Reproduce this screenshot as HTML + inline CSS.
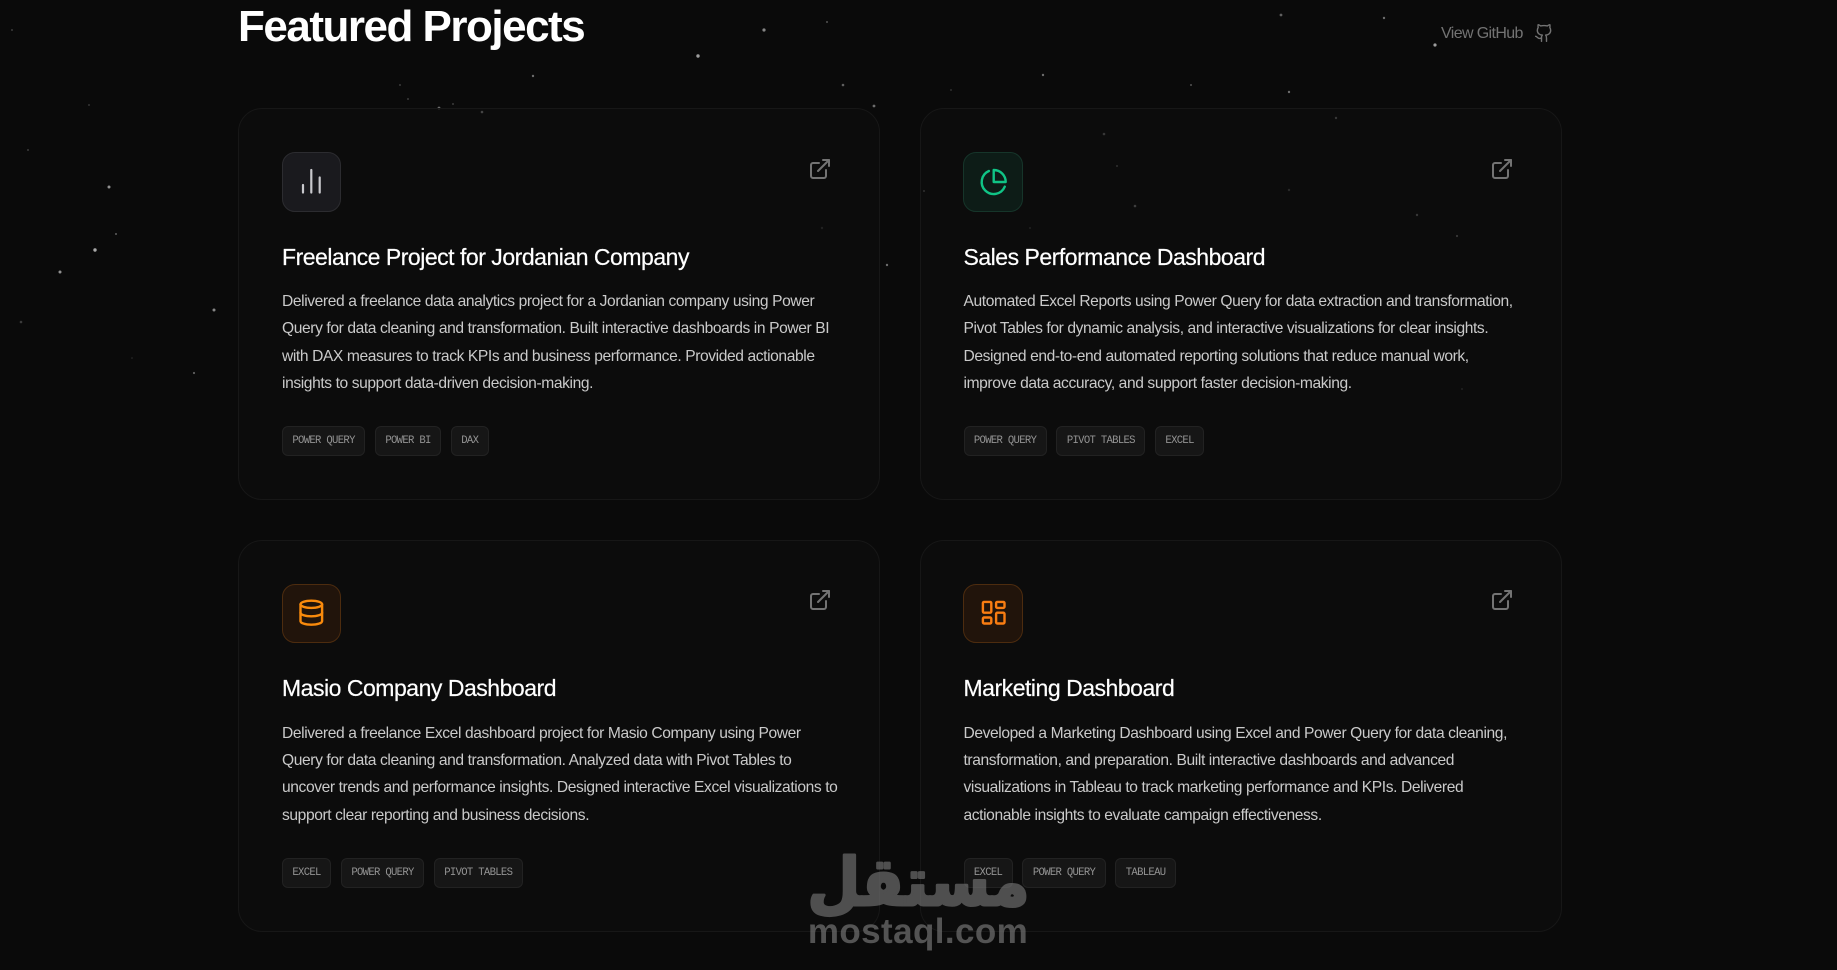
<!DOCTYPE html>
<html lang="en">
<head>
<meta charset="utf-8">
<title>Featured Projects</title>
<style>
html,body{margin:0;padding:0;background:#0a0a0a;}
body{width:1837px;height:970px;overflow:hidden;position:relative;font-family:"Liberation Sans",Arial,sans-serif;color:#fff;}
.stars{position:absolute;left:0;top:0;z-index:0;}
h2{position:absolute;left:238px;top:2px;margin:0;font-size:44px;line-height:50px;font-weight:700;letter-spacing:-1.5px;white-space:nowrap;color:#fff;z-index:2;}
.gh{position:absolute;left:1441px;top:22px;font-size:16px;line-height:24px;letter-spacing:-.62px;color:#737373;white-space:nowrap;z-index:2;}
.ghi{position:absolute;left:1534px;top:23px;z-index:2;}
.card{position:absolute;width:640px;height:390px;border:1px solid #171717;border-radius:24px;background:rgba(17,17,17,.42);z-index:1;}
.icon{position:absolute;left:42.5px;top:43px;width:57px;height:58px;border-radius:13px;border:1px solid;}
.icon svg{position:absolute;left:-1px;top:-1px;}
.gray{background:#1a1a1e;border-color:#2c2c30;}
.green{background:#0d1c17;border-color:#16352a;}
.orange{background:#21140b;border-color:#4d2c0f;}
.ext{position:absolute;left:569px;top:48px;}
.r2 .ext{top:47px;}
h3{position:absolute;left:43px;top:133px;margin:0;font-size:23px;line-height:30px;font-weight:400;letter-spacing:-.48px;white-space:nowrap;color:#fff;-webkit-text-stroke:.2px #fff;}
.r2 h3{top:132px;}
p{position:absolute;left:43px;top:179px;margin:0;font-size:15.6px;line-height:27.3px;letter-spacing:-.4px;white-space:nowrap;color:#cacaca;}
.r2 p{top:179.4px;}
.tags{position:absolute;left:43px;top:317px;display:flex;gap:9.8px;}
.tags span{display:block;height:28px;line-height:28px;padding:0 9.4px;border:1px solid #222;border-radius:6px;background:#161616;font-family:"Liberation Mono",monospace;font-size:10.6px;letter-spacing:-.69px;color:#939393;white-space:nowrap;}
.wm{position:absolute;z-index:5;white-space:nowrap;}
.wsvg{left:0;top:0;opacity:.68;}
.wl{left:806px;top:910px;width:224px;text-align:center;color:rgba(112,112,112,.72);font-family:"Liberation Sans",sans-serif;font-weight:700;font-size:35px;line-height:44px;letter-spacing:.4px;}
</style>
</head>
<body>
<svg class="stars" width="1837" height="970" viewBox="0 0 1837 970" fill="#fff">
<circle cx="12" cy="30" r="1" opacity=".2"/><circle cx="89" cy="105" r="1" opacity=".18"/><circle cx="28" cy="150" r="1" opacity=".2"/>
<circle cx="109" cy="187" r="1.5" opacity=".55"/><circle cx="116" cy="234" r="1" opacity=".35"/><circle cx="95" cy="250" r="1.7" opacity=".65"/>
<circle cx="60" cy="272" r="1.5" opacity=".55"/><circle cx="21" cy="322" r="1.3" opacity=".2"/><circle cx="214" cy="310" r="1.5" opacity=".5"/>
<circle cx="132" cy="358" r=".8" opacity=".15"/><circle cx="194" cy="373" r="1.1" opacity=".35"/>
<circle cx="764" cy="30" r="1.6" opacity=".5"/><circle cx="698" cy="56" r="1.7" opacity=".6"/><circle cx="827" cy="22" r="1" opacity=".3"/>
<circle cx="533" cy="76" r="1.2" opacity=".4"/><circle cx="843" cy="85" r="1.3" opacity=".35"/><circle cx="400" cy="85" r="1" opacity=".2"/>
<circle cx="408" cy="99" r="1" opacity=".2"/><circle cx="439" cy="108" r="1.4" opacity=".4"/><circle cx="453" cy="104" r="1" opacity=".2"/>
<circle cx="482" cy="112" r="1.3" opacity=".4"/><circle cx="874" cy="106" r="1.4" opacity=".4"/><circle cx="323" cy="155" r="1.3" opacity=".25"/>
<circle cx="822" cy="228" r="1.2" opacity=".15"/><circle cx="887" cy="265" r="1.2" opacity=".4"/>
<circle cx="1281" cy="15" r="1.4" opacity=".35"/><circle cx="1384" cy="18" r="1.2" opacity=".4"/><circle cx="1435" cy="45" r="1.6" opacity=".6"/>
<circle cx="1043" cy="75" r="1.2" opacity=".4"/><circle cx="1191" cy="85" r="1" opacity=".3"/><circle cx="1289" cy="92" r="1.2" opacity=".4"/>
<circle cx="951" cy="90" r="1" opacity=".15"/><circle cx="1336" cy="118" r="1.2" opacity=".3"/><circle cx="1104" cy="134" r="1.3" opacity=".3"/>
<circle cx="1117" cy="166" r="1" opacity=".25"/><circle cx="924" cy="191" r="1" opacity=".25"/><circle cx="1289" cy="190" r="1.2" opacity=".2"/>
<circle cx="1135" cy="206" r="1.3" opacity=".35"/><circle cx="1417" cy="215" r="1.2" opacity=".3"/><circle cx="1457" cy="236" r="1.1" opacity=".3"/>
<circle cx="1030" cy="228" r=".9" opacity=".2"/><circle cx="1462" cy="389" r="1" opacity=".15"/>
</svg>

<h2>Featured Projects</h2>
<div class="gh">View GitHub</div>
<svg class="ghi" width="20" height="20" viewBox="0 0 24 24" fill="none" stroke="#737373" stroke-width="1.7" stroke-linecap="round" stroke-linejoin="round"><path d="M15 22v-4a4.8 4.8 0 0 0-1-3.5c3 0 6-2 6-5.5.08-1.25-.27-2.48-1-3.5.28-1.15.28-2.35 0-3.5 0 0-1 0-3 1.5-2.64-.5-5.36-.5-8 0C6 2 5 2 5 2c-.3 1.15-.3 2.35 0 3.5A5.403 5.403 0 0 0 4 9c0 3.5 3 5.5 6 5.5-.39.49-.68 1.05-.85 1.65-.17.6-.22 1.23-.15 1.85v4"/><path d="M9 18c-4.51 2-5-2-7-2"/></svg>

<div class="card" style="left:238px;top:108px;">
  <div class="icon gray"><svg width="60" height="60" viewBox="0 0 60 60" fill="none" stroke="#c8c8cc" stroke-width="2.2" stroke-linecap="round"><path d="M21 40.5V33"/><path d="M29.3 40.5V18"/><path d="M37.7 40.5V25.5"/></svg></div>
  <svg class="ext" width="24" height="24" viewBox="0 0 24 24" fill="none" stroke="#737373" stroke-width="2" stroke-linecap="round" stroke-linejoin="round"><path d="M18 13v6a2 2 0 0 1-2 2H5a2 2 0 0 1-2-2V8a2 2 0 0 1 2-2h6"/><polyline points="15 3 21 3 21 9"/><line x1="10" y1="14" x2="21" y2="3"/></svg>
  <h3>Freelance Project for Jordanian Company</h3>
  <p>Delivered a freelance data analytics project for a Jordanian company using Power<br>Query for data cleaning and transformation. Built interactive dashboards in Power BI<br>with DAX measures to track KPIs and business performance. Provided actionable<br>insights to support data-driven decision-making.</p>
  <div class="tags"><span>POWER QUERY</span><span>POWER BI</span><span>DAX</span></div>
</div>

<div class="card" style="left:919.5px;top:108px;">
  <div class="icon green" style="width:58px"><svg width="60" height="60" viewBox="0 0 60 60" fill="none"><g transform="translate(16.3 15.6) scale(1.2)" stroke="#10c486" stroke-width="2" stroke-linecap="round" stroke-linejoin="round"><path d="M21.21 15.89A10 10 0 1 1 8 2.83"/><path d="M22 12A10 10 0 0 0 12 2v10z"/></g></svg></div>
  <svg class="ext" width="24" height="24" viewBox="0 0 24 24" fill="none" stroke="#737373" stroke-width="2" stroke-linecap="round" stroke-linejoin="round"><path d="M18 13v6a2 2 0 0 1-2 2H5a2 2 0 0 1-2-2V8a2 2 0 0 1 2-2h6"/><polyline points="15 3 21 3 21 9"/><line x1="10" y1="14" x2="21" y2="3"/></svg>
  <h3>Sales Performance Dashboard</h3>
  <p>Automated Excel Reports using Power Query for data extraction and transformation,<br>Pivot Tables for dynamic analysis, and interactive visualizations for clear insights.<br>Designed end-to-end automated reporting solutions that reduce manual work,<br>improve data accuracy, and support faster decision-making.</p>
  <div class="tags"><span>POWER QUERY</span><span>PIVOT TABLES</span><span>EXCEL</span></div>
</div>

<div class="card r2" style="left:238px;top:539.5px;">
  <div class="icon orange" style="height:57px"><svg width="60" height="60" viewBox="0 0 60 60" fill="none"><g transform="translate(14.9 14.3) scale(1.2)" stroke="#f98a0c" stroke-width="2" stroke-linecap="round" stroke-linejoin="round"><ellipse cx="12" cy="5" rx="9" ry="3"/><path d="M3 5V19A9 3 0 0 0 21 19V5"/><path d="M3 12A9 3 0 0 0 21 12"/></g></svg></div>
  <svg class="ext" width="24" height="24" viewBox="0 0 24 24" fill="none" stroke="#737373" stroke-width="2" stroke-linecap="round" stroke-linejoin="round"><path d="M18 13v6a2 2 0 0 1-2 2H5a2 2 0 0 1-2-2V8a2 2 0 0 1 2-2h6"/><polyline points="15 3 21 3 21 9"/><line x1="10" y1="14" x2="21" y2="3"/></svg>
  <h3>Masio Company Dashboard</h3>
  <p>Delivered a freelance Excel dashboard project for Masio Company using Power<br>Query for data cleaning and transformation. Analyzed data with Pivot Tables to<br>uncover trends and performance insights. Designed interactive Excel visualizations to<br>support clear reporting and business decisions.</p>
  <div class="tags"><span>EXCEL</span><span>POWER QUERY</span><span>PIVOT TABLES</span></div>
</div>

<div class="card r2" style="left:919.5px;top:539.5px;">
  <div class="icon orange" style="width:58px;height:57px"><svg width="60" height="60" viewBox="0 0 60 60" fill="none"><g transform="translate(16.3 14.3) scale(1.2)" stroke="#f97d12" stroke-width="2" stroke-linecap="round" stroke-linejoin="round"><rect x="3" y="3" width="7" height="9" rx="1"/><rect x="14" y="3" width="7" height="5" rx="1"/><rect x="14" y="12" width="7" height="9" rx="1"/><rect x="3" y="16" width="7" height="5" rx="1"/></g></svg></div>
  <svg class="ext" width="24" height="24" viewBox="0 0 24 24" fill="none" stroke="#737373" stroke-width="2" stroke-linecap="round" stroke-linejoin="round"><path d="M18 13v6a2 2 0 0 1-2 2H5a2 2 0 0 1-2-2V8a2 2 0 0 1 2-2h6"/><polyline points="15 3 21 3 21 9"/><line x1="10" y1="14" x2="21" y2="3"/></svg>
  <h3>Marketing Dashboard</h3>
  <p>Developed a Marketing Dashboard using Excel and Power Query for data cleaning,<br>transformation, and preparation. Built interactive dashboards and advanced<br>visualizations in Tableau to track marketing performance and KPIs. Delivered<br>actionable insights to evaluate campaign effectiveness.</p>
  <div class="tags"><span>EXCEL</span><span>POWER QUERY</span><span>TABLEAU</span></div>
</div>

<svg class="wm wsvg" width="1837" height="970" viewBox="0 0 1837 970"><text transform="translate(918.5 905) scale(.92 1)" text-anchor="middle" direction="rtl" font-family="'DejaVu Sans',sans-serif" font-weight="700" font-size="66" fill="#707070" stroke="#707070" stroke-width="3" stroke-linejoin="round">مستقل</text></svg>
<div class="wm wl">mostaql.com</div>
</body>
</html>
